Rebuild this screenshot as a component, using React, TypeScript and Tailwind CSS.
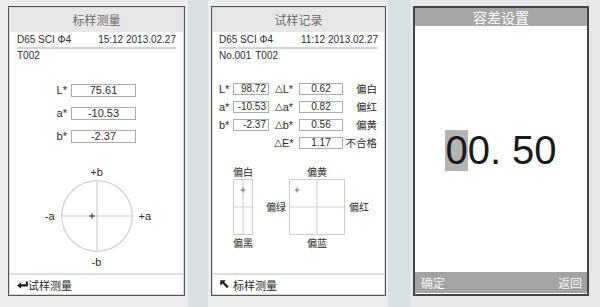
import React from "react";

const CJK = "font-[family-name:'Noto_Sans_CJK_SC',sans-serif]";

function BackArrow() {
  return (
    <svg width="11" height="8" viewBox="0 0 11 8" className="shrink-0">
      <path d="M0 4.5 L4.2 1.2 L4.2 3.3 L8.8 3.3 L8.8 0.5 L10.8 0.5 L10.8 5.6 L4.2 5.6 L4.2 7.8 Z" fill="#1f1f1f" />
    </svg>
  );
}

function DiagArrow() {
  return (
    <svg width="9" height="9" viewBox="0 0 9 9" className="shrink-0">
      <path d="M0.3 0.3 L5.8 0.3 L4.1 2 L8.7 6.6 L7.1 8.2 L2.5 3.6 L0.3 5.8 Z" fill="#1f1f1f" />
    </svg>
  );
}

function Delta({ t }: { t: string }) {
  return (
    <span className="w-[30px] flex items-center justify-center">
      <span className="font-[family-name:'DejaVu_Sans',sans-serif] text-[10px] leading-[12px]">△</span>
      <span>{t}</span>
    </span>
  );
}

function Panel1() {
  const rows: [string, string][] = [
    ["L*", "75.61"],
    ["a*", "-10.53"],
    ["b*", "-2.37"],
  ];
  return (
    <div className="w-[177px] h-[290px] border border-[#575757] bg-white flex flex-col">
      <div className="flex-1 border border-[#d6d6d6] flex flex-col min-h-0">
        <div className={`h-[24px] bg-[#e7e7e7] flex items-center justify-center text-[12px] text-[#6d6d6d] ${CJK}`}>
          标样测量
        </div>
        <div className="flex-1 flex flex-col px-[7px] text-[#2b2b2b]">
          <div className="flex justify-between h-[15px] leading-[15px] text-[10px]">
            <span>D65 SCI Φ4</span>
            <span>15:12 2013.02.27</span>
          </div>
          <div className="h-[2px] bg-[#d3d3d3]" />
          <div className="h-[14px] leading-[14px] text-[10px]">T002</div>
          <div className="mt-[21px] flex flex-col gap-[10px] text-[11px]">
            {rows.map(([l, v]) => (
              <div key={l} className="flex h-[13px] items-center">
                <span className="w-[54px] text-right pr-[4px] leading-[13px]">{l}</span>
                <div className="w-[65px] h-[13px] border border-[#ababab] leading-[11px] text-center">{v}</div>
              </div>
            ))}
          </div>
          <div className="mt-[22px] flex flex-col items-center text-[11px]">
            <div className="h-[15px] leading-[15px]">+b</div>
            <div className="flex items-center">
              <span className="w-[21px] text-right pr-[6px] leading-[14px]">-a</span>
              <svg width="72" height="72" viewBox="0 0 72 72">
                <circle cx="36" cy="36" r="35.3" fill="none" stroke="#cdcdcd" strokeWidth="1.2" />
                <line x1="0.7" y1="36" x2="71.3" y2="36" stroke="#cdcdcd" strokeWidth="1.2" />
                <line x1="36" y1="0.7" x2="36" y2="71.3" stroke="#cdcdcd" strokeWidth="1.2" />
                <line x1="28" y1="36" x2="34" y2="36" stroke="#333" strokeWidth="1" />
                <line x1="31" y1="33" x2="31" y2="39" stroke="#333" strokeWidth="1" />
              </svg>
              <span className="w-[21px] pl-[6px] leading-[14px]">+a</span>
            </div>
            <div className="mt-[3px] leading-[14px]">-b</div>
          </div>
        </div>
        <div className="h-[21px] border-t-2 border-[#dedede] px-[7px] flex items-center text-[#2b2b2b]">
          <BackArrow />
          <span className={`text-[11px] leading-[14px] ${CJK}`}>试样测量</span>
        </div>
      </div>
    </div>
  );
}

function Panel2() {
  const rows: [string, string, string, string, string][] = [
    ["L*", "98.72", "L*", "0.62", "偏白"],
    ["a*", "-10.53", "a*", "0.82", "偏红"],
    ["b*", "-2.37", "b*", "0.56", "偏黄"],
    ["", "", "E*", "1.17", "不合格"],
  ];
  return (
    <div className="w-[175px] h-[290px] border border-[#575757] bg-white flex flex-col">
      <div className="flex-1 border border-[#d6d6d6] flex flex-col min-h-0">
        <div className={`h-[24px] bg-[#e7e7e7] flex items-center justify-center text-[12px] text-[#6d6d6d] ${CJK}`}>
          试样记录
        </div>
        <div className="flex-1 flex flex-col px-[6px] text-[#2b2b2b]">
          <div className="flex justify-between h-[15px] leading-[15px] text-[10px]">
            <span>D65 SCI Φ4</span>
            <span>11:12 2013.02.27</span>
          </div>
          <div className="h-[2px] bg-[#d3d3d3]" />
          <div className="h-[14px] leading-[14px] text-[10px]">
            No.001<span className="ml-[4px]">T002</span>
          </div>
          <div className="mt-[20px] flex flex-col gap-[6px] text-[11px]">
            {rows.map(([l1, v1, l2, v2, t], i) => (
              <div key={i} className="flex h-[12px] items-center leading-[12px]">
                <span className="w-[14px]">{l1}</span>
                {v1 ? (
                  <div className="w-[36px] h-[12px] border border-[#ababab] text-right pr-[2px] text-[10px] leading-[10px]">{v1}</div>
                ) : (
                  <div className="w-[36px]" />
                )}
                <Delta t={l2} />
                <div className="w-[44px] h-[12px] border border-[#ababab] text-center text-[10px] leading-[10px]">{v2}</div>
                <span className={`w-[34px] text-right text-[10.5px] ${CJK}`}>{t}</span>
              </div>
            ))}
          </div>
          <div className={`mt-[16px] flex items-start text-[10px] ${CJK}`}>
            <div className="ml-[14px] w-[20px] flex flex-col items-center">
              <div className="h-[14px] leading-[14px] whitespace-nowrap">偏白</div>
              <svg width="20" height="56" viewBox="0 0 20 56">
                <rect x="0.5" y="0.5" width="19" height="55" fill="none" stroke="#cdcdcd" strokeWidth="1" />
                <line x1="10" y1="0.5" x2="10" y2="55.5" stroke="#cdcdcd" strokeWidth="1" />
                <line x1="0.5" y1="28" x2="19.5" y2="28" stroke="#cdcdcd" strokeWidth="1" />
                <line x1="7.5" y1="11" x2="12.5" y2="11" stroke="#555" strokeWidth="0.8" />
                <line x1="10" y1="8.5" x2="10" y2="13.5" stroke="#555" strokeWidth="0.8" />
              </svg>
              <div className="mt-[1px] h-[14px] leading-[14px] whitespace-nowrap">偏黑</div>
            </div>
            <div className="ml-[12px] grid grid-cols-[24px_56px_26px] grid-rows-[14px_56px_15px]">
              <div />
              <div className="text-center leading-[14px]">偏黄</div>
              <div />
              <div className="self-center text-right pr-[3px] leading-[14px]">偏绿</div>
              <svg width="56" height="56" viewBox="0 0 56 56">
                <rect x="0.5" y="0.5" width="55" height="55" fill="none" stroke="#cdcdcd" strokeWidth="1" />
                <line x1="28" y1="0.5" x2="28" y2="55.5" stroke="#cdcdcd" strokeWidth="1" />
                <line x1="0.5" y1="28" x2="55.5" y2="28" stroke="#cdcdcd" strokeWidth="1" />
                <line x1="5.5" y1="11" x2="10.5" y2="11" stroke="#555" strokeWidth="0.8" />
                <line x1="8" y1="8.5" x2="8" y2="13.5" stroke="#555" strokeWidth="0.8" />
              </svg>
              <div className="self-center pl-[4px] leading-[14px]">偏红</div>
              <div />
              <div className="mt-[1px] text-center leading-[14px]">偏蓝</div>
              <div />
            </div>
          </div>
        </div>
        <div className="h-[21px] border-t-2 border-[#dedede] pl-[7px] flex items-center gap-[4px] text-[#2b2b2b]">
          <DiagArrow />
          <span className={`text-[11px] leading-[14px] ${CJK}`}>标样测量</span>
        </div>
      </div>
    </div>
  );
}

function Panel3() {
  return (
    <div className="w-[176px] h-[290px] border-2 border-[#444] bg-white flex flex-col">
      <div className={`h-[18px] leading-[18px] bg-[#a6a6a6] text-center text-[14px] text-white ${CJK}`}>容差设置</div>
      <div className="flex-1 flex justify-center pt-[104px]">
        <div className="h-[41px] text-[40px] leading-[41px] text-[#1a1a1a] whitespace-pre">
          <span className="inline-block bg-[#b4b4b4] h-[41px]">0</span>0. 50
        </div>
      </div>
      <div className={`h-[21px] bg-[#a3a3a3] flex items-center justify-between pl-[6px] pr-[5px] text-[12px] text-[#f4f4f4] ${CJK}`}>
        <span>确定</span>
        <span>返回</span>
      </div>
      <div className="h-[1px] bg-white" />
    </div>
  );
}

export default function App() {
  return (
    <div className="w-[600px] h-[307px] bg-[#d7e0e3] flex overflow-hidden font-[family-name:'Liberation_Sans','Noto_Sans_CJK_SC',sans-serif]">
      <div className="w-[188px] h-full bg-[#eaebeb] pl-[8px] pt-[6px]">
        <Panel1 />
      </div>
      <div className="ml-[20px] w-[180px] h-full bg-[#eaebeb] pl-[3px] pt-[6px]">
        <Panel2 />
      </div>
      <div className="ml-[22px] flex-1 h-full bg-[#e6e7e8] pl-[3px] pt-[6px]">
        <Panel3 />
      </div>
    </div>
  );
}
